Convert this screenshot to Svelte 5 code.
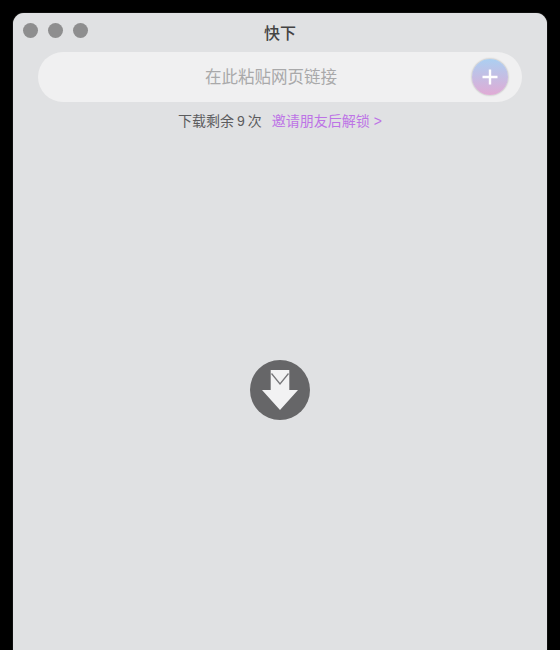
<script>
    let remaining = 9;
    let url = "";
</script>

<main class="window">
    <header class="titlebar">
        <div class="lights">
            <span class="light"></span>
            <span class="light"></span>
            <span class="light"></span>
        </div>
        <h1>快下</h1>
        <div></div>
    </header>

    <div class="searchbar">
        <input type="text" placeholder="在此粘贴网页链接" bind:value={url} />
        <button class="add" aria-label="添加">
            <svg viewBox="0 0 36 36" width="36" height="36">
                <path d="M18 10.5v15M10.5 18h15" stroke="#fff" stroke-width="2.4" fill="none" />
            </svg>
        </button>
    </div>

    <p class="quota">
        <span>下载剩余<span class="num">{remaining}</span>次</span>
        <a href="#invite">邀请朋友后解锁 &gt;</a>
    </p>

    <div class="empty">
        <svg viewBox="0 0 60 60" width="60" height="60" aria-hidden="true">
            <circle cx="30" cy="30" r="30" fill="#666668" />
            <path d="M20.700 10h18.600v20H48L30 50 12 30h8.700z" fill="#f2f2f3" />
            <path d="M21.500 13.500L30 24l8.500-10.500" fill="none" stroke="#77777a" stroke-width="1.300" />
        </svg>
    </div>
</main>

<style>
    :global(body) {
        background: #000;
    }
    .window {
        box-sizing: border-box;
        height: 637px;
        margin: 13px 13px 0;
        background: #e0e1e3;
        border-radius: 11px 11px 0 0;
        box-shadow: 0 0 1px #999;
        display: flex;
        flex-direction: column;
        align-items: center;
        overflow: hidden;
        font-family: "Liberation Sans", "Noto Sans CJK SC", sans-serif;
    }
    .titlebar {
        width: 100%;
        height: 39px;
        display: grid;
        grid-template-columns: 1fr auto 1fr;
        align-items: center;
    }
    .lights {
        display: flex;
        gap: 10px;
        padding-left: 9.500px;
        padding-bottom: 5px;
    }
    .light {
        width: 15px;
        height: 15px;
        border-radius: 50%;
        background: #8e8e8f;
    }
    h1 {
        margin: 0 0 1px;
        font-size: 16px;
        font-weight: 500;
        color: #444;
    }
    .searchbar {
        box-sizing: border-box;
        width: 484px;
        height: 50px;
        flex: none;
        border-radius: 25px;
        background: #f0f0f1;
        display: flex;
        align-items: center;
        padding: 0 14px 0 0;
    }
    input {
        flex: 1;
        min-width: 0;
        border: none;
        outline: none;
        background: none;
        padding: 1px 0 0 32px;
        text-align: center;
        font: inherit;
        font-size: 16.5px;
        color: #444;
    }
    input::placeholder {
        color: #a9a9aa;
        opacity: 1;
    }
    .add {
        width: 36px;
        height: 36px;
        flex: none;
        padding: 0;
        border: none;
        border-radius: 50%;
        background: linear-gradient(#abcff1, #e0abd5);
        box-shadow: 0 0 2px #999;
        display: block;
    }
    .add svg {
        display: block;
    }
    .quota {
        margin: 10px 0 0;
        display: flex;
        gap: 10px;
        font-size: 14px;
        line-height: 18px;
        color: #5c5c5e;
    }
    .num {
        margin: 0 3px;
    }
    a {
        color: #bd74e6;
        text-decoration: none;
    }
    .empty {
        margin-top: 230px;
        line-height: 0;
    }
</style>
